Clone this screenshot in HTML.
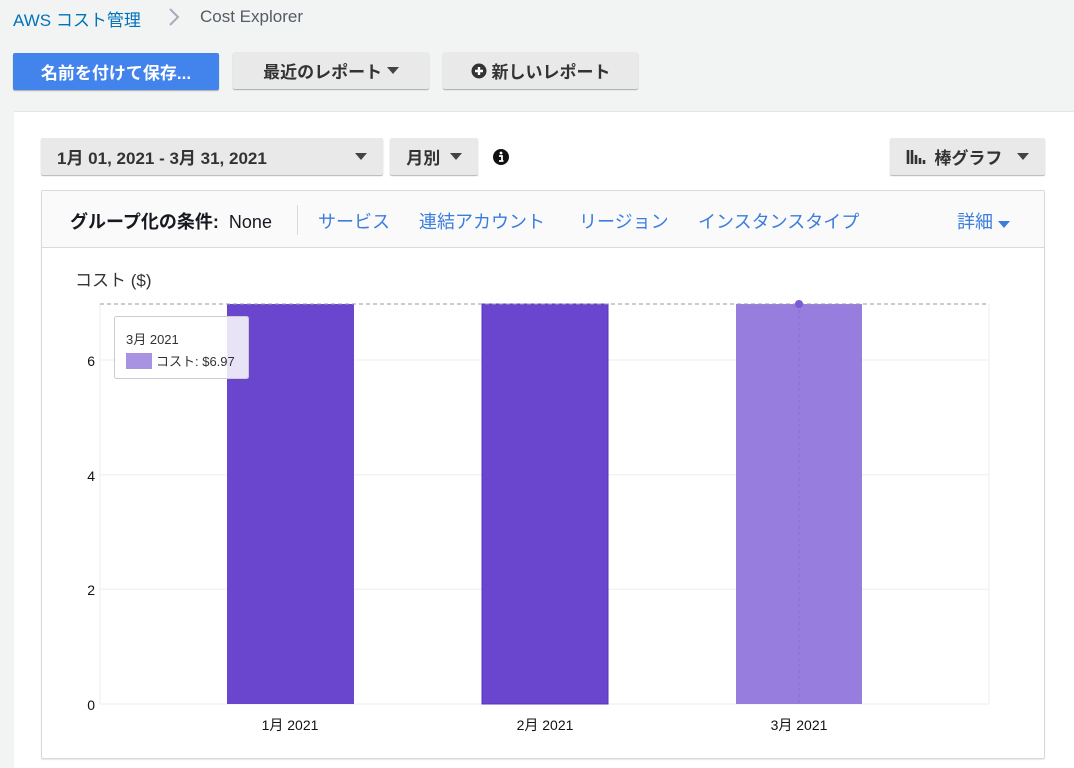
<!DOCTYPE html>
<html><head><meta charset="utf-8"><style>
*{box-sizing:border-box;margin:0;padding:0}
body{width:1074px;height:768px;overflow:hidden;background:#f2f3f3;font-family:"Liberation Sans","Noto Sans CJK JP",sans-serif;position:relative;color:#16191f}
.a{position:absolute}
.btn{position:absolute;height:37px;border-radius:2px;background:#e9e9e9;box-shadow:0 1px 1px rgba(0,0,0,.3);font-size:17px;font-weight:bold;color:#333;display:flex;align-items:center;justify-content:center}
.tri{display:inline-block;width:0;height:0;border-left:6px solid transparent;border-right:6px solid transparent;border-top:7px solid #444}
.lnk{color:#3b7ddd;font-size:18px;position:absolute;top:208px}
</style></head><body>
<div class="a" style="left:13px;top:6px;font-size:17px;color:#0073bb">AWS コスト管理</div>
<svg class="a" style="left:167px;top:7px" width="14" height="20"><path d="M3 2l8 8-8 8" fill="none" stroke="#aab" stroke-width="2"/></svg>
<div class="a" style="left:200px;top:7px;font-size:17px;color:#545b64">Cost Explorer</div>
<div class="btn" style="left:13px;top:53px;width:206px;background:#4384ec;color:#fff">名前を付けて保存...</div>
<div class="btn" style="left:233px;top:52px;width:196px">最近のレポート&nbsp;<span class="tri"></span></div>
<div class="btn" style="left:443px;top:52px;width:195px"><svg width="16" height="16" style="margin-right:5px"><circle cx="8" cy="8" r="7.5" fill="#333"/><path d="M8 4v8M4 8h8" stroke="#fff" stroke-width="2.4"/></svg>新しいレポート</div>
<div class="a" style="left:14px;top:111px;width:1060px;height:657px;background:#fff;border-top:1px solid #e4e6e6"></div>
<div class="btn" style="left:41px;top:138px;width:342px;justify-content:space-between;padding:0 16px">1月 01, 2021 - 3月 31, 2021<span class="tri"></span></div>
<div class="btn" style="left:390px;top:138px;width:88px">月別&nbsp;&nbsp;<span class="tri"></span></div>
<svg class="a" style="left:493px;top:149px" width="16" height="16"><circle cx="8" cy="8" r="8" fill="#111"/><circle cx="8" cy="4" r="1.4" fill="#fff"/><path d="M6 7h3v5h1.5M6 12h4.5" stroke="#fff" stroke-width="1.8" fill="none"/></svg>
<div class="btn" style="left:890px;top:138px;width:155px"><svg width="22" height="16" style="margin-right:6px"><path d="M2 1v14M6 1v14M10 6v9M14 9v6M18 11v4" stroke="#333" stroke-width="2.6"/></svg>棒グラフ&nbsp;&nbsp;&nbsp;<span class="tri"></span></div>
<div class="a" style="left:41px;top:190px;width:1004px;height:569px;border:1px solid #d5dbdb;border-radius:2px;box-shadow:0 1px 1px rgba(0,0,0,.1)"></div>
<div class="a" style="left:42px;top:191px;width:1002px;height:57px;background:#fafafa;border-bottom:1px solid #d5dbdb"></div>
<div class="a" style="left:70px;top:208px;font-size:18px"><b>グループ化の条件:</b>&nbsp; None</div>
<div class="a" style="left:297px;top:205px;width:1px;height:30px;background:#d5dbdb"></div>
<div class="lnk" style="left:318px">サービス</div>
<div class="lnk" style="left:419px">連結アカウント</div>
<div class="lnk" style="left:579px">リージョン</div>
<div class="lnk" style="left:698px">インスタンスタイプ</div>
<div class="lnk" style="left:957px">詳細 <span class="tri" style="border-top-color:#3b7ddd"></span></div>
<div class="a" style="left:75px;top:266px;font-size:17px;color:#333">コスト ($)</div>
<svg class="a" style="left:0;top:0" width="1074" height="768">
<g stroke="#eee" stroke-width="1"><path d="M100 360H989M100 474.7H989M100 589.3H989M100 704H989M100 304V704M989 304V704"/></g>
<rect x="227" y="304" width="127" height="400" fill="#6a46cf"/>
<rect x="482" y="304" width="126" height="400" fill="#6a46cf" stroke="#5a2fc8"/>
<rect x="736" y="304" width="126" height="400" fill="#977ddd"/>
<path d="M100 304H989" stroke="#999" stroke-dasharray="4 3"/>
<path d="M799 304V704" stroke="#8a70d0" stroke-dasharray="3 3"/>
<circle cx="799" cy="304" r="4" fill="#7b5bd6"/>
<g font-size="14" fill="#111" font-family="Liberation Sans,Noto Sans CJK JP,sans-serif" text-anchor="end"><text x="95" y="366">6</text><text x="95" y="481">4</text><text x="95" y="595">2</text><text x="95" y="710">0</text></g>
<g font-size="14" fill="#111" font-family="Liberation Sans,Noto Sans CJK JP,sans-serif" text-anchor="middle"><text x="290" y="730">1月 2021</text><text x="545" y="730">2月 2021</text><text x="799" y="730">3月 2021</text></g>
<rect x="114.5" y="316.5" width="134" height="62" rx="2" fill="rgba(255,255,255,.85)" stroke="#ccc"/>
<text x="126" y="344" font-size="13" fill="#333" font-family="Liberation Sans,Noto Sans CJK JP,sans-serif">3月 2021</text>
<rect x="126" y="353" width="26" height="16" fill="#a793e2"/>
<text x="156" y="366" font-size="13" fill="#333" font-family="Liberation Sans,Noto Sans CJK JP,sans-serif">コスト: $6.97</text>
</svg>
</body></html>
